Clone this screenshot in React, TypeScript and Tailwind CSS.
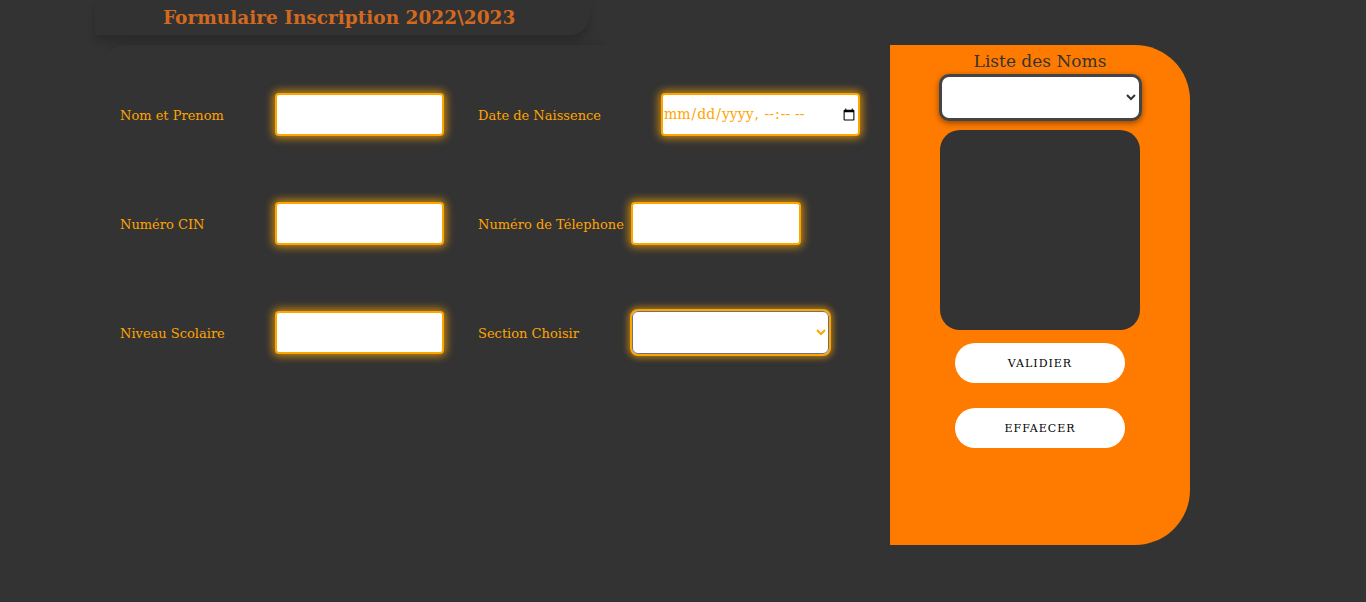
const serif = { fontFamily: 'Georgia, "DejaVu Serif", serif' }

const inputCls =
  'h-[43px] rounded-[4px] border-2 border-[#ffa500] bg-white shadow-[0_0_8px_2px_rgba(255,165,0,0.75)] outline-none'

function Row({
  left,
  right,
  rightLabelW,
  children,
}: {
  left: string
  right: string
  rightLabelW: string
  children: React.ReactNode
}) {
  return (
    <div className="flex h-[43px] items-center">
      <label className="w-[155px] pt-[2px] text-[13px] text-[#ffa500]">{left}</label>
      <input type="text" className={`${inputCls} w-[169px]`} />
      <label className={`ml-[34px] pt-[2px] text-[13px] text-[#ffa500] ${rightLabelW}`}>{right}</label>
      {children}
    </div>
  )
}

export default function App() {
  return (
    <div className="flex min-h-[602px] w-full bg-[#333333]" style={serif}>
      <div className="ml-[95px] flex w-[795px] flex-col">
        <div className="flex h-[35px] w-[495px] items-center rounded-br-[20px] bg-[#323232] pl-[68px] shadow-[0_6px_8px_rgba(0,0,0,0.18)]">
          <h1 className="text-[18.5px] font-bold text-[#d2691e]">Formulaire Inscription 2022\2023</h1>
        </div>
        <div className="ml-[5px] mt-[10px] flex w-[510px] flex-col rounded-tl-[25px] shadow-[0_-8px_6px_-6px_rgba(0,0,0,0.12)]">
          <div className="-mr-[300px] flex flex-col gap-[66px] pl-[20px] pt-[48px]">
            <Row left="Nom et Prenom" right="Date de Naissence" rightLabelW="w-[183px]">
              <input
                type="datetime-local"
                className={`${inputCls} w-[199px] text-[14px] text-[#ffa500]`}
              />
            </Row>
            <Row left="Numéro CIN" right="Numéro de Télephone" rightLabelW="w-[153px] whitespace-nowrap">
              <input type="tel" className={`${inputCls} w-[170px]`} />
            </Row>
            <div className="flex h-[43px] items-center">
              <label className="w-[155px] pt-[2px] text-[13px] text-[#ffa500]">Niveau Scolaire</label>
              <input type="text" className={`${inputCls} w-[169px]`} />
              <label className="ml-[34px] w-[152px] pt-[2px] text-[13px] text-[#ffa500]">Section Choisir</label>
              <select className="h-[47px] w-[201px] rounded-[8px] border-2 border-[#ffa500] bg-white text-[#ffa500] shadow-[0_0_6px_2px_rgba(255,165,0,0.6)] outline outline-1 -outline-offset-3 outline-gray-500">
                <option></option>
              </select>
            </div>
          </div>
        </div>
      </div>
      <div className="mt-[45px] flex h-[500px] w-[300px] flex-col items-center rounded-r-[55px] bg-[#ff7b00]">
        <h2 className="mt-[5px] text-[17px] leading-[23px] text-[#333333]">Liste des Noms</h2>
        <select className="mt-[1px] h-[47px] w-[203px] rounded-[10px] border-[3px] border-[#444] bg-white text-[#333] shadow-[0_2px_6px_rgba(0,0,0,0.45)]">
          <option></option>
        </select>
        <div className="mt-[9px] h-[200px] w-[200px] rounded-[20px] bg-[#333333]" />
        <button
          type="button"
          className="mt-[13px] h-[40px] w-[170px] rounded-full bg-white pt-[3px] text-[11px] tracking-[1px] text-black"
        >
          VALIDIER
        </button>
        <button
          type="button"
          className="mt-[25px] h-[40px] w-[170px] rounded-full bg-white pt-[3px] text-[11px] tracking-[1px] text-black"
        >
          EFFAECER
        </button>
      </div>
    </div>
  )
}
